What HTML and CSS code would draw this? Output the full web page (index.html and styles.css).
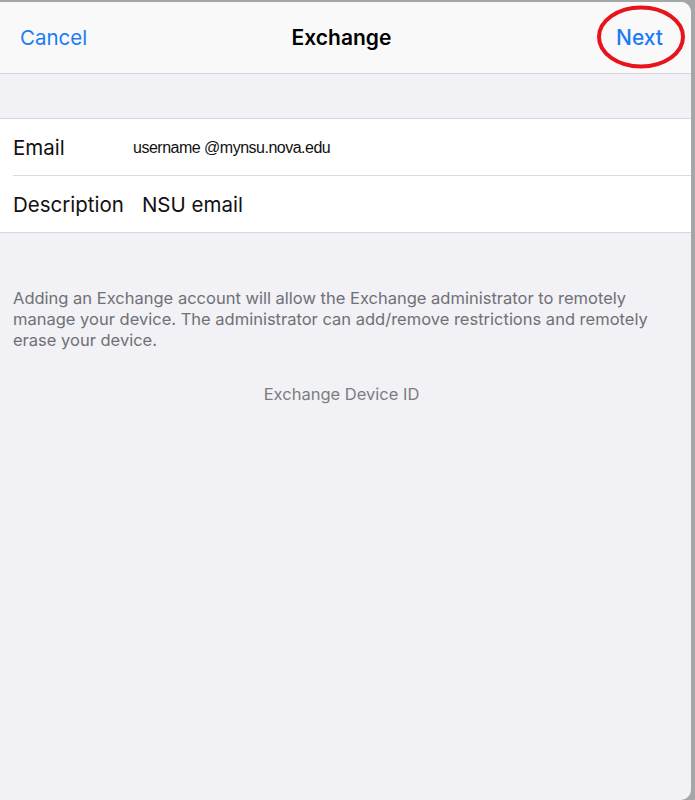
FILE: index.html
```html
<!DOCTYPE html>
<html>
<head>
<meta charset="utf-8">
<link rel="stylesheet" href="styles.css">
</head>
<body>
<div class="sheet">
  <header class="nav">
    <span class="nav-btn">Cancel</span>
    <span class="nav-title">Exchange</span>
    <span class="nav-btn nav-next">Next</span>
    <svg class="circle" width="96" height="70" viewBox="0 0 96 70"><ellipse cx="48" cy="35" rx="42" ry="29.5" fill="none" stroke="#e8141b" stroke-width="4"/></svg>
  </header>
  <div class="gap"></div>
  <section class="group">
    <div class="row">
      <span class="label label-email">Email</span>
      <span class="value-email">username @mynsu.nova.edu</span>
    </div>
    <div class="row">
      <span class="label">Description</span>
      <span class="value">NSU email</span>
    </div>
  </section>
  <p class="footer">Adding an Exchange account will allow the Exchange administrator to remotely manage your device. The administrator can add/remove restrictions and remotely erase your device.</p>
  <p class="device-id">Exchange Device ID</p>
</div>
</body>
</html>
```

FILE: styles.css
```css
html, body {
  margin: 0;
  padding: 0;
  height: 100%;
}
body {
  background: #a4a6a8;
  font-family: "Inter", "Roboto", "Liberation Sans", sans-serif;
  overflow: hidden;
}
.sheet {
  position: relative;
  width: 691px;
  height: 798px;
  margin-top: 2px;
  background: #f1f1f6;
  border-radius: 0 10px 10px 0;
  overflow: hidden;
}
.nav {
  position: relative;
  height: 71px;
  background: #f9f9fa;
  border-bottom: 1px solid #d4d4d8;
  display: flex;
  align-items: center;
  justify-content: space-between;
  padding: 0 28px 0 20px;
}
.nav-btn {
  color: #1a7cf5;
  font-size: 20.5px;
}
.nav-title {
  position: absolute;
  left: 0;
  right: 0;
  padding-right: 8px;
  text-align: center;
  font-size: 21px;
  font-weight: 600;
  color: #000;
  pointer-events: none;
}
.nav-next {
  font-size: 21px;
  font-weight: 500;
}
.circle {
  position: absolute;
  left: 593px;
  top: 0px;
}
.gap {
  height: 44px;
}
.group {
  background: #fff;
  border-top: 1px solid #d8d8dc;
  border-bottom: 1px solid #d8d8dc;
  padding-left: 13px;
}
.row {
  height: 56px;
  display: flex;
  align-items: center;
}
.row + .row {
  border-top: 1px solid #dcdcdf;
}
.label {
  font-size: 20.5px;
  color: #111;
  margin-right: 18px;
}
.label-email {
  width: 120px;
  margin-right: 0;
}
.value {
  font-size: 20.5px;
  color: #111;
}
.value-email {
  font-family: "Liberation Sans", sans-serif;
  font-size: 16px;
  color: #111;
  letter-spacing: -0.5px;
  padding-top: 2px;
}
.footer {
  margin: 55px 20px 0 13px;
  font-size: 16.5px;
  line-height: 21px;
  color: #707075;
}
.device-id {
  margin: 33px 8px 0 0;
  text-align: center;
  font-size: 16.5px;
  color: #7c7c81;
}
```
